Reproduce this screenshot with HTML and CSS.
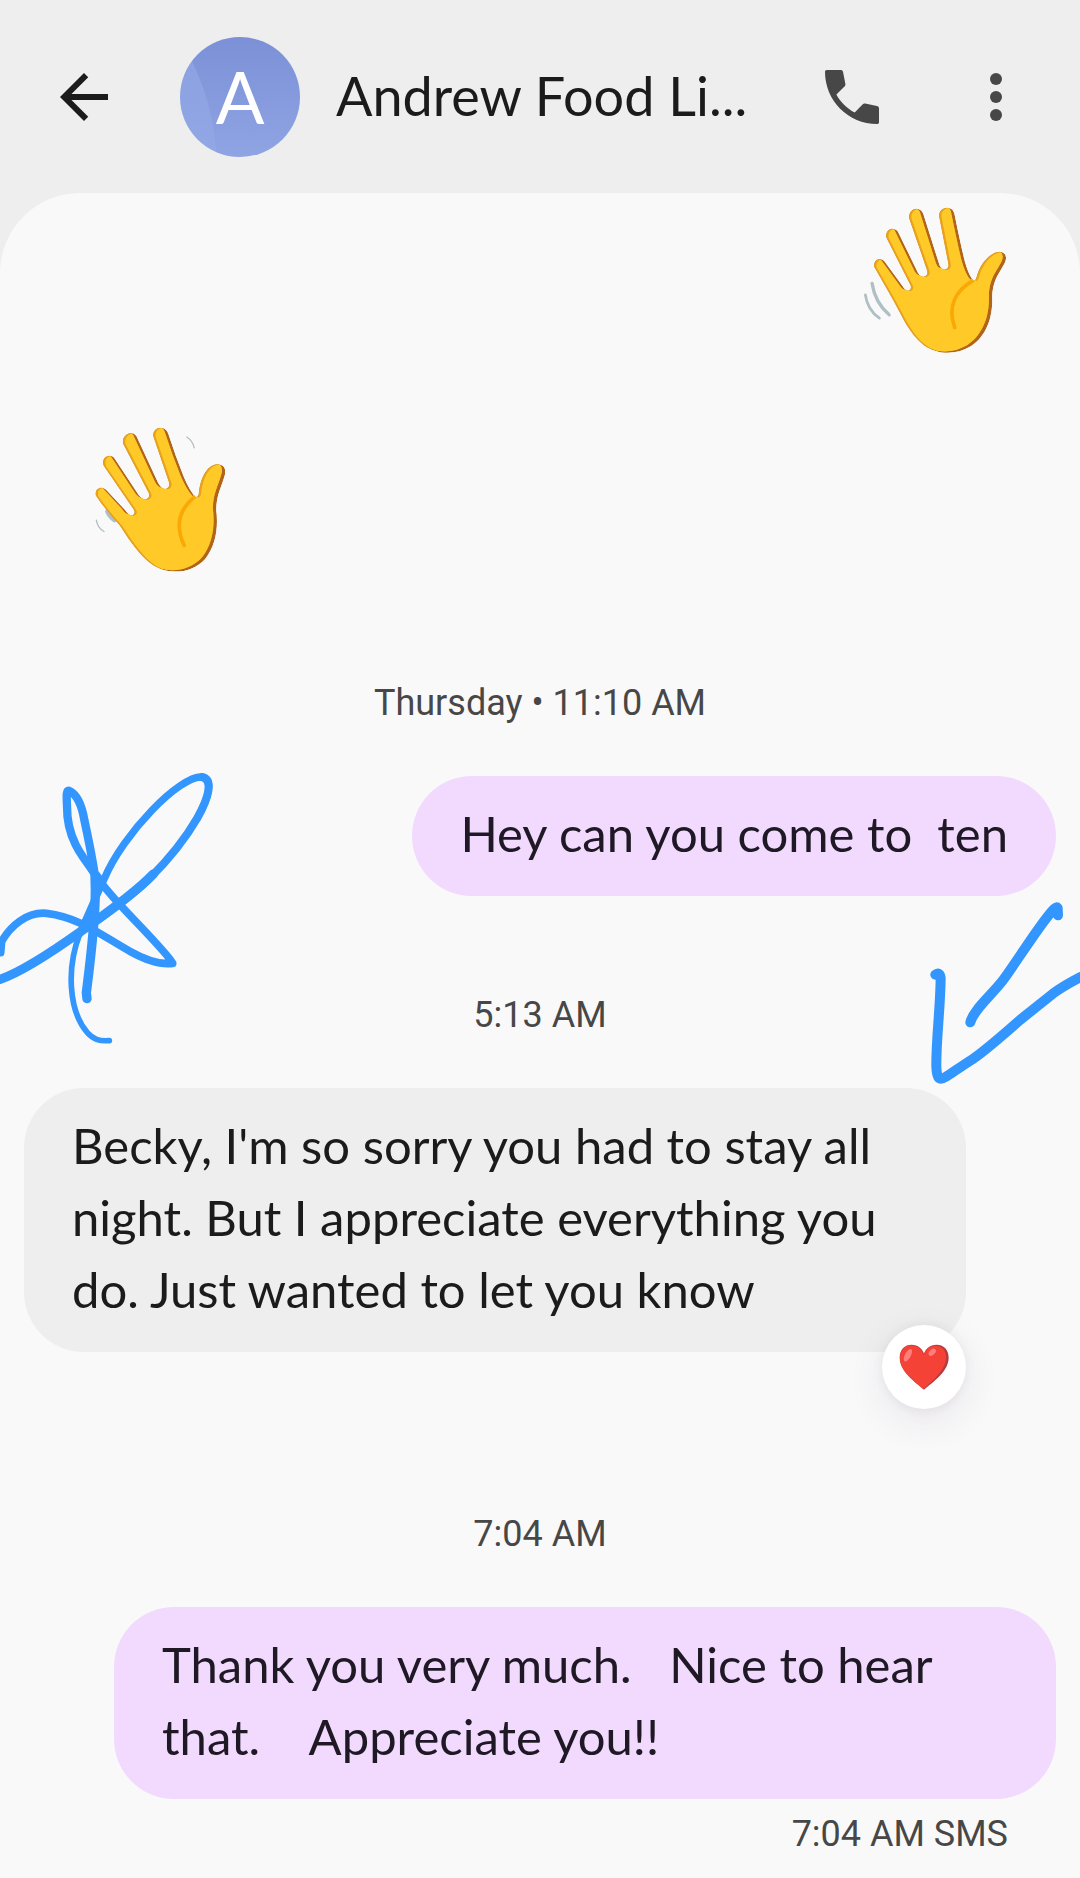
FILE: index.html
```html
<!DOCTYPE html>
<html lang="en">
<head>
    <meta charset="UTF-8">
    <meta name="viewport" content="width=device-width, initial-scale=1.0">
    <title>Andrew Food Li...</title>
    <link rel="stylesheet" href="styles.css">
</head>
<body>
    <!-- Shared hand shapes -->
    <svg class="defs" width="0" height="0" aria-hidden="true">
        <defs>
            <path id="hand-a" d="M103 230 C101 210 121 200 134 214 L188 288 Q198 304 206 302 Q216 298 212 286 L140 144 C134 120 161 108 174 125 L234 248 Q242 262 252 260 Q266 256 261 240 L208 86 C204 56 240 46 250 72 L296 218 Q302 240 314 239 Q327 236 325 222 L297 78 C298 48 338 46 343 72 Q362 166 374 214 Q386 258 401 273 Q407 270 409 262 C418 224 448 186 480 186 C496 188 501 202 494 218 C478 250 458 268 456 320 C458 380 440 436 392 468 C345 496 290 493 250 463 C208 430 190 384 160 330 Z"/>
            <path id="hand-b" d="M78 256 C74 236 96 226 110 240 L166 300 Q178 318 186 316 Q198 311 192 299 L102 168 C92 144 120 128 134 145 L206 254 Q218 270 228 268 Q242 262 236 248 L160 102 C154 74 188 58 200 80 L264 218 Q274 238 286 237 Q300 234 297 218 L250 80 C246 52 284 44 294 70 Q316 138 340 198 Q358 242 377 262 Q386 258 386 248 C390 208 408 166 440 163 C460 162 468 176 464 194 C454 232 438 254 438 300 C444 350 438 404 405 446 C366 490 296 494 252 466 C212 440 184 398 150 346 C120 312 98 286 78 256 Z"/>
            <clipPath id="clip-a"><use href="#hand-a"/></clipPath>
            <clipPath id="clip-a-inner"><use href="#hand-a" transform="translate(7 1)"/></clipPath>
            <clipPath id="clip-b"><use href="#hand-b"/></clipPath>
            <clipPath id="clip-b-inner"><use href="#hand-b" transform="translate(7 1)"/></clipPath>
        </defs>
    </svg>

    <header class="topbar">
        <button class="icon-btn back" type="button" aria-label="Back">
            <svg viewBox="0 0 24 24"><path d="M20 11H7.83l5.59-5.59L12 4l-8 8 8 8 1.41-1.41L7.83 13H20v-2z"/></svg>
        </button>
        <div class="avatar">A</div>
        <h1 class="contact">Andrew Food Li...</h1>
        <button class="icon-btn" type="button" aria-label="Call">
            <svg viewBox="0 0 24 24"><path d="M3.6 3h4.6c.4 0 .7.2.8.6l.8 4.1c0 .3 0 .6-.3.8L6.8 11.2c1.2 2.4 3.6 4.7 6.1 6l2.6-2.7c.3-.3.6-.4.9-.3l3.9.8c.4.1.7.4.7.8v4.6c0 .4-.3.6-.6.6C10.7 21 3 13.3 3 3.600c0-.3.2-.6.6-.6z"/></svg>
        </button>
        <button class="icon-btn more" type="button" aria-label="More options">
            <svg viewBox="0 0 24 24"><circle cx="12" cy="6" r="2"/><circle cx="12" cy="12" r="2"/><circle cx="12" cy="18" r="2"/></svg>
        </button>
    </header>

    <main class="chat">
        <svg class="sticker sticker-sent" viewBox="70 50 430 440" role="img" aria-label="Waving hand">
            <g fill="none" stroke="#b0bec5" stroke-linecap="round">
                <path d="M97 280 C103 320 120 350 148 374" stroke-width="10"/>
                <path d="M77 314 C81 344 96 368 119 384" stroke-width="8"/>
            </g>
            <g clip-path="url(#clip-a)">
                <use href="#hand-a" fill="#b0651a"/>
                <use href="#hand-a" fill="#e8a21c" transform="translate(-10 -4)"/>
                <g clip-path="url(#clip-a-inner)"><use href="#hand-a" fill="#ffca28" transform="translate(-10 -4)"/></g>
                <path d="M398 272 C350 300 320 345 344 412" fill="none" stroke="#f9a806" stroke-width="11" stroke-linecap="round"/>
            </g>
        </svg>

        <svg class="sticker sticker-received" viewBox="70 50 400 440" role="img" aria-label="Waving hand">
            <g fill="none" stroke="#b0bec5" stroke-linecap="round">
                <path d="M350 82 Q368 94 372 114" stroke-width="4"/>
                <path d="M80 330 Q84 354 103 364" stroke-width="4"/>
                <path d="M112 304 Q118 320 134 331" stroke-width="12"/>
            </g>
            <g clip-path="url(#clip-b)">
                <use href="#hand-b" fill="#b0651a"/>
                <use href="#hand-b" fill="#e8a21c" transform="translate(-10 -4)"/>
                <g clip-path="url(#clip-b-inner)"><use href="#hand-b" fill="#ffca28" transform="translate(-10 -4)"/></g>
                <path d="M374 260 C332 294 312 342 342 405" fill="none" stroke="#f9a806" stroke-width="11" stroke-linecap="round"/>
            </g>
        </svg>

        <time class="stamp">Thursday • 11:10 AM</time>
        <p class="bubble sent">Hey can you come to  ten</p>

        <time class="stamp stamp-gap">5:13 AM</time>
        <div class="bubble received">Becky, I'm so sorry you had to stay all night. But I appreciate everything you do. Just wanted to let you know<span class="reaction"><svg viewBox="176 166 152 140" role="img" aria-label="Heart">
                <path d="M252 305 C225 282 178 250 178 208 C178 182 194 168 214 168 C234 168 247 180 252 196 C257 180 270 168 290 168 C311 168 327 182 327 208 C327 250 279 282 252 305Z" fill="#b73a3e"/>
                <path d="M250 303 C225 280 179 249 179 209 C179 184 194 170 212 170 C232 170 245 182 250 200 C256 182 268 171 286 171 C306 171 319 184 319 207 C319 246 275 281 250 303Z" fill="#f44336"/>
                <ellipse cx="203" cy="200" rx="9" ry="21" fill="#ff7f7c" transform="rotate(28 203 200)"/>
                <ellipse cx="277" cy="191" rx="8" ry="13" fill="#ff7f7c" transform="rotate(45 277 191)"/>
            </svg></span></div>

        <time class="stamp stamp-reacted">7:04 AM</time>
        <p class="bubble sent">Thank you very much.   Nice to hear that.    Appreciate you!!</p>
        <p class="status">7:04 AM SMS</p>

        <!-- Pen marks drawn over the conversation -->
        <svg class="ink ink-left" viewBox="0 0 780 930" aria-hidden="true">
            <path d="M328 872 C296 874 280 868 262 848 C204 780 200 650 240 550 C262 500 288 440 312 388" stroke-width="17"/>
            <path d="M240 550 C262 500 288 440 312 388 C370 250 540 76 606 81 C640 88 628 140 592 204" stroke-width="22"/>
            <path d="M606 81 C640 88 628 140 592 204 C556 266 500 334 450 384 C410 424 350 470 296 508" stroke-width="24"/>
            <path d="M460 372 C410 424 320 490 240 546 C150 610 60 668 0 688" stroke-width="28"/>
            <path d="M2 608 L5 574 C30 530 80 484 140 490 C240 502 310 560 390 604 C440 632 480 645 518 640 C505 614 430 540 354 458 C320 420 290 385 272 354" stroke-width="23"/>
            <path d="M300 390 C250 325 200 270 201 168 C200 140 198 122 206 122 C230 132 245 164 253 210 C266 270 276 320 284 372" stroke-width="25"/>
            <path d="M285 376 L286 420 C286 520 270 640 259 728 L261 746" stroke-width="28"/>
        </svg>
        <svg class="ink ink-right" viewBox="0 0 600 660" aria-hidden="true">
            <path d="M166 284 Q182 274 182 298 C180 400 168 480 169 560 C170 600 180 602 198 590 C210 584 244 558 280 536 C320 508 370 464 420 420 L520 340 Q550 318 602 291" stroke-width="30"/>
            <path d="M534 106 L533 84 Q528 78 512 98 C470 148 424 224 368 302 C330 350 280 390 271 427" stroke-width="30"/>
        </svg>
    </main>
</body>
</html>
```
FILE: styles.css
```css
* {
    box-sizing: border-box;
}

body {
    margin: 0;
    min-height: 100vh;
    display: flex;
    flex-direction: column;
    background-color: #eeeeee;
    color: #1c1b1c;
    font-family: Lato, "Open Sans", sans-serif;
}

.defs {
    position: absolute;
}

/* Top bar */
.topbar {
    display: flex;
    align-items: center;
    padding: 37px 48px 36px;
}

.icon-btn {
    flex: none;
    width: 72px;
    height: 72px;
    padding: 0;
    border: 0;
    background: none;
    color: #474747;
}

.icon-btn svg {
    display: block;
    fill: currentColor;
}

.back {
    color: #1c1b1c;
}

.more {
    margin-left: 72px;
}

.avatar {
    flex: none;
    display: flex;
    align-items: center;
    justify-content: center;
    width: 120px;
    height: 120px;
    margin: 0 36px 0 60px;
    padding-bottom: 2px;
    border-radius: 50%;
    background: radial-gradient(circle at -203px 130px, rgba(148, 170, 230, 0.6) 239px, transparent 240px), linear-gradient(#7c90d7, #8fa4e3);
    color: #fff;
    font-size: 72px;
}

.contact {
    flex: 1;
    margin: 0;
    padding-bottom: 2px;
    font-size: 54px;
    font-weight: 400;
    line-height: 72px;
    white-space: nowrap;
}

/* Conversation */
.chat {
    position: relative;
    flex: 1;
    display: flex;
    flex-direction: column;
    padding: 13px 24px 20px;
    border-radius: 80px 80px 0 0;
    background-color: #f9f9f9;
    overflow: hidden;
}

.sticker {
    height: 148px;
}

.sticker-sent {
    align-self: flex-end;
    width: 144px;
    margin-right: 49px;
}

.sticker-received {
    align-self: flex-start;
    width: 134px;
    margin: 72px 0 105px 69px;
}

.stamp,
.status {
    color: #474747;
    font-family: Roboto, sans-serif;
    font-size: 36px;
    line-height: 48px;
}

.stamp {
    margin-bottom: 49px;
    text-align: center;
}

.stamp-gap {
    margin-top: 95px;
}

.stamp-reacted {
    margin-top: 158px;
}

.bubble {
    position: relative;
    max-width: 942px;
    margin: 0;
    padding: 21px 48px 27px;
    border-radius: 60px;
    font-size: 49px;
    line-height: 72px;
    white-space: pre-wrap;
}

.sent {
    align-self: flex-end;
    background-color: #f2daff;
    color: #1f1825;
}

.received {
    align-self: flex-start;
    background-color: #eeeeee;
}

.reaction {
    position: absolute;
    right: 0;
    bottom: -57px;
    display: flex;
    align-items: center;
    justify-content: center;
    width: 84px;
    height: 84px;
    border-radius: 50%;
    background-color: #fff;
    box-shadow: 0 12px 36px rgba(80, 50, 110, 0.1), 0 0 12px rgba(0, 0, 0, 0.06);
}

.reaction svg {
    width: 50px;
    height: 46px;
}

.status {
    margin: 11px 48px 0 0;
    text-align: right;
}

/* Pen marks */
.ink {
    position: absolute;
    fill: none;
    stroke: #3396ff;
    stroke-linecap: round;
    stroke-linejoin: round;
}

.ink-left {
    top: 557px;
    left: 0;
    width: 260px;
    height: 310px;
}

.ink-right {
    top: 687px;
    right: 0;
    width: 200px;
    height: 220px;
}
```
